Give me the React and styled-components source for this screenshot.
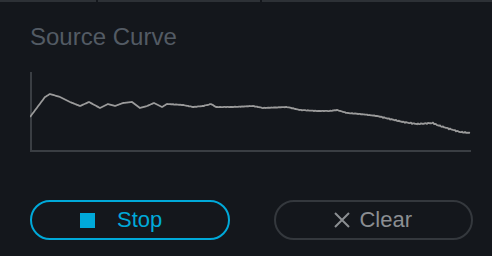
import React from "react";
import styled, { createGlobalStyle } from "styled-components";

const GlobalStyle = createGlobalStyle`
  body {
    margin: 0;
    background: #14171c;
    font-family: "Liberation Sans", Arial, sans-serif;
  }
`;

const Page = styled.div`
  width: 492px;
  height: 256px;
  overflow: hidden;
  background: #14171c;
`;

const TabStrip = styled.div`
  display: flex;
  gap: 2px;
  height: 2px;
`;

const TabEdge = styled.div`
  background: #2d3136;
  flex: ${(props) => (props.$width ? `0 0 ${props.$width}px` : "1")};
`;

const Panel = styled.div`
  padding: 21px 19px 0 30px;
`;

const Title = styled.h2`
  margin: 0;
  font-size: 24px;
  line-height: 28px;
  font-weight: 400;
  color: #535b64;
`;

const Chart = styled.svg`
  display: block;
  margin-top: 20px;
`;

const ButtonRow = styled.div`
  display: flex;
  gap: 44px;
  margin-top: 47px;
`;

const Button = styled.button`
  box-sizing: border-box;
  width: 200px;
  height: 40px;
  border-radius: 20px;
  background: transparent;
  border: 2px solid ${(props) => (props.$active ? "#00a9d9" : "#34383d")};
  color: ${(props) => (props.$active ? "#00a9d9" : "#8b8e92")};
  font-family: inherit;
  font-size: 22px;
  display: flex;
  align-items: center;
  justify-content: ${(props) => (props.$active ? "flex-start" : "center")};
  padding: ${(props) => (props.$active ? "0 0 0 48px" : "0")};
  gap: ${(props) => (props.$active ? "22px" : "9px")};
  cursor: pointer;
`;

const StopSquare = styled.span`
  width: 15px;
  height: 15px;
  background: #00a9d9;
`;

const keyPoints = [
  [30, 117], [45, 97], [50, 94], [60, 97], [70, 102], [80, 106], [89, 102],
  [100, 108], [108, 104], [115, 106], [123, 103], [132, 102], [140, 108],
  [147, 106], [154, 103], [162, 107], [167, 104], [183, 105], [193, 107],
  [203, 106], [211, 104], [216, 107], [233, 107], [253, 106], [263, 108],
  [287, 107], [300, 110], [317, 111], [330, 111], [337, 110], [347, 113],
  [360, 114], [377, 116], [390, 119], [403, 122], [417, 124], [433, 123],
  [437, 125], [450, 129], [460, 132], [470, 133],
];

function curvePath() {
  const pts = [];
  for (let x = 30; x <= 470; x += 1) {
    let i = 0;
    while (i < keyPoints.length - 2 && keyPoints[i + 1][0] < x) i++;
    const [x0, y0] = keyPoints[i];
    const [x1, y1] = keyPoints[i + 1];
    const t = Math.min(1, Math.max(0, (x - x0) / (x1 - x0)));
    let y = y0 + (y1 - y0) * t;
    if (x > 170) {
      // a bit of measurement noise, stronger towards the tail
      const amp = x > 380 ? 0.6 : 0.25;
      y += amp * Math.sin(x * 12.9898) * Math.cos(x * 4.1414);
    }
    pts.push(`${x},${y.toFixed(2)}`);
  }
  return "M" + pts.join(" L");
}

export default function App() {
  const d = curvePath();
  return (
    <Page>
      <GlobalStyle />
      <TabStrip>
        <TabEdge $width={96} />
        <TabEdge $width={162} />
        <TabEdge />
      </TabStrip>
      <Panel>
        <Title>Source Curve</Title>
        <Chart width="441" height="82" viewBox="30 71 441 82">
          <line x1="31" y1="72" x2="31" y2="151" stroke="#3a3e43" strokeWidth="2" />
          <line x1="30" y1="151" x2="471" y2="151" stroke="#3a3e43" strokeWidth="2" />
          <path d={d} fill="none" stroke="#9b9b9b" strokeWidth="1.8" strokeLinejoin="round" />
        </Chart>
        <ButtonRow>
          <Button $active>
            <StopSquare />
            Stop
          </Button>
          <Button>
            <svg width="16" height="16" viewBox="0 0 16 16">
              <path d="M1 1 L15 15 M15 1 L1 15" stroke="#8b8e92" strokeWidth="2" fill="none" />
            </svg>
            Clear
          </Button>
        </ButtonRow>
      </Panel>
    </Page>
  );
}
